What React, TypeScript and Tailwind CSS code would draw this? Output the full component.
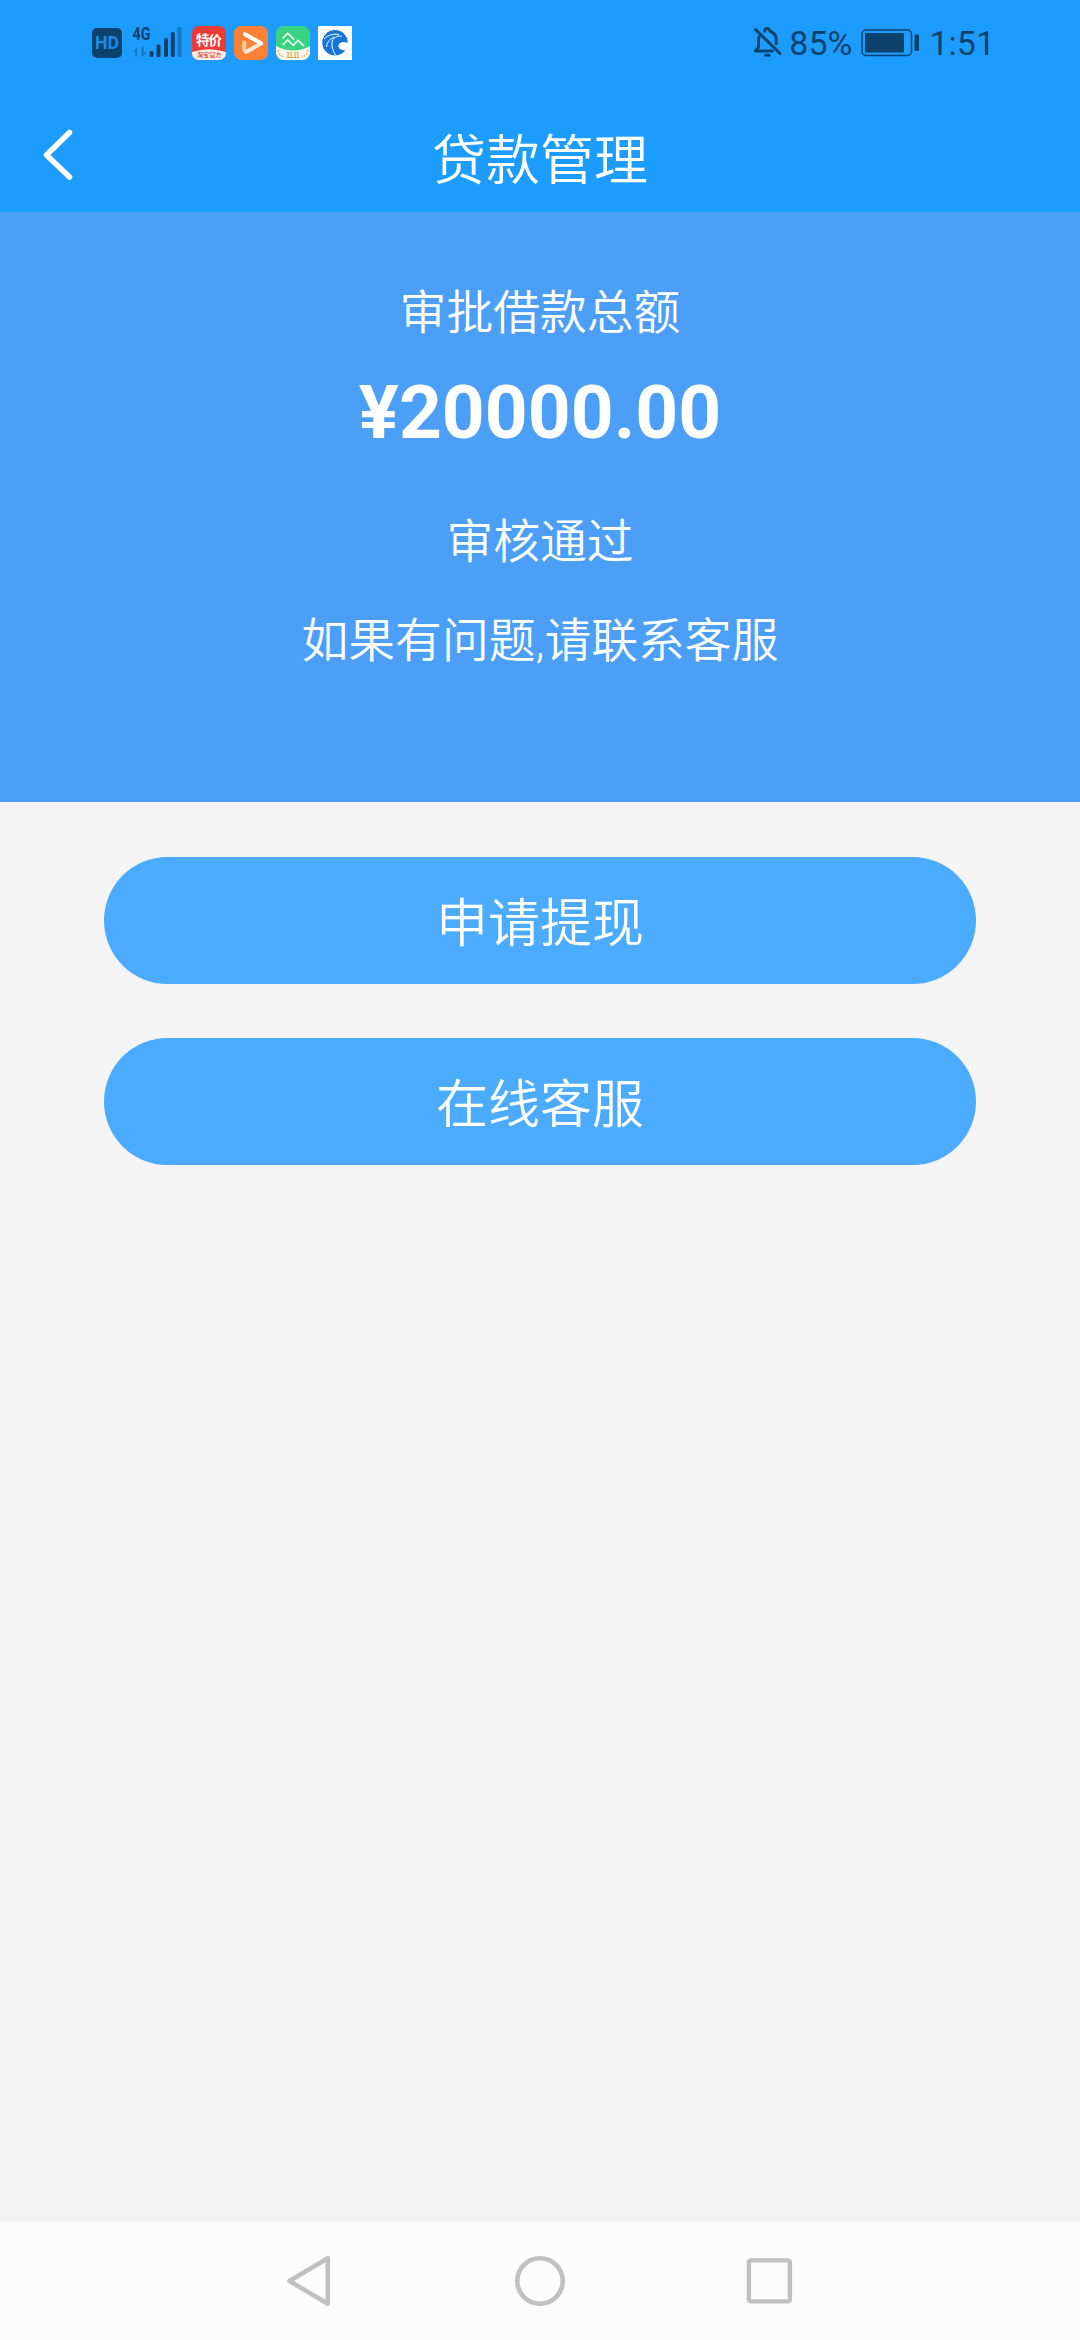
import type { ReactNode } from "react";

interface ActionButtonProps {
  label: string;
}

const actions = ["申请提现", "在线客服"];

function AppIcon({ children }: { children: ReactNode }) {
  return (
    <svg viewBox="0 0 34 34" className="size-[34px] shrink-0">
      {children}
    </svg>
  );
}

function SignalIcon() {
  return (
    <svg viewBox="0 -8 52 50" className="ml-[9px] h-[50px] w-[52px] shrink-0" fill="#0d426d">
      <text x="1.5" y="14" fontSize="19" fontWeight="700" textLength="18" lengthAdjust="spacingAndGlyphs">
        4G
      </text>
      <g opacity="0.45">
        <path d="M2.5 25.5 6 21v9.5H4.2v-5zM10.5 21h2v5.5H16l-5.5 4.2z" />
      </g>
      <rect x="18.5" y="25" width="4" height="6" rx="1.5" />
      <rect x="25.5" y="18.5" width="4" height="12.5" rx="1.5" />
      <rect x="33" y="12" width="4" height="19" rx="1.5" />
      <rect x="39.8" y="6" width="4" height="25" rx="1.5" />
      <rect x="46.5" y="1" width="4" height="30" rx="1.5" opacity="0.4" />
    </svg>
  );
}

function StatusBar() {
  return (
    <div className="flex h-[86px] items-center pr-[85px] pl-[92px] font-['Roboto',sans-serif] text-[#0d426d]">
      <svg viewBox="0 0 30 30" className="size-[30px] shrink-0">
        <rect width="30" height="30" rx="5" fill="#0d426d" />
        <text x="3" y="21.3" fontSize="18" fontWeight="700" fill="#1c8ce6" textLength="24" lengthAdjust="spacingAndGlyphs">
          HD
        </text>
      </svg>
      <SignalIcon />

      {/* Notification icons */}
      <div className="ml-[9px] flex gap-2 font-['Noto_Sans_CJK_SC',sans-serif]">
        <AppIcon>
          <defs>
            <clipPath id="saleClip">
              <rect width="34" height="34" rx="7" />
            </clipPath>
          </defs>
          <g clipPath="url(#saleClip)">
            <rect width="34" height="34" fill="#ec3b36" />
            <path d="M0 26Q17 20.5 34 26v8H0z" fill="#fdeedd" />
            <text x="4" y="18.5" fontSize="13.5" fontWeight="700" fill="#fff" textLength="26">
              特价
            </text>
            <text x="5" y="31" fontSize="6.2" fontWeight="500" fill="#d5402f" textLength="24.5">
              淘宝官方
            </text>
          </g>
        </AppIcon>
        <AppIcon>
          <rect width="34" height="34" rx="7.5" fill="#fc8136" />
          <path d="M10.3 16.5V24" stroke="#ffcf9f" strokeWidth="4" strokeLinecap="round" />
          <path d="M27 17.5 12 26" stroke="#ffe9d6" strokeWidth="4" strokeLinecap="round" />
          <path d="M11 8.2 27 17.2" stroke="#fff" strokeWidth="4" strokeLinecap="round" />
        </AppIcon>
        <AppIcon>
          <defs>
            <clipPath id="stockClip">
              <rect width="34" height="34" rx="7.5" />
            </clipPath>
          </defs>
          <g clipPath="url(#stockClip)">
            <rect width="34" height="34" fill="#38d280" />
            <path d="M0 20Q17 29 34 20v14H0z" fill="#fbf8ea" />
            <path d="m6.7 12.3 5-5 6.6 6.4M6.7 19l5-5 5.6 5.4 4.7-5 6 5.8" fill="none" stroke="#e9fff2" strokeWidth="1.7" />
            <path d="M2 24q1 5 6 7M32 24q-1 5-6 7" fill="none" stroke="#d7bd79" strokeWidth="1.6" strokeDasharray="2 1" />
            <text x="10" y="31.5" fontSize="7" fontWeight="700" fill="#c9a558" textLength="14">
              11.11
            </text>
          </g>
        </AppIcon>
        <AppIcon>
          <rect width="34" height="34" fill="#fff" />
          <circle cx="17" cy="16.8" r="12.7" fill="#1476d8" />
          <path d="M34 19.5c-3-.3-4-3.5-8-3.5-4 0-6.3 2.3-5.2 5.2 1 2.6 4.4 3.8 9.2 2.3z" fill="#fff" />
          <path d="M24 10.2c-7-1-11 3.3-10 9.3.5 3.5 1.5 7 4 10M6 13q6-6 15-4.6M8.5 21Q9 14 16 11" fill="none" stroke="#fff" strokeWidth="1" />
        </AppIcon>
      </div>

      {/* Muted bell, battery, clock */}
      <div className="ml-auto flex items-center">
        <svg viewBox="0 0 30 34" className="h-[34px] w-[30px]" fill="none" stroke="#0d426d" strokeWidth="3" strokeLinecap="round" strokeLinejoin="round">
          <path d="M2.5 3.5 27 27.5" />
          <path d="M11.5 5.2Q12 2.5 14.2 2.5T17 5.2q6.2 2 6.2 9v3.6M6.2 10.8q-.7 1.8-.7 4v6.5L2.5 25h17" />
          <path d="M12.5 29.2h3.5" />
        </svg>
        <span className="ml-[6px] text-[34px] leading-none">85%</span>
        <svg viewBox="0 0 60 28" className="ml-[9px] h-7 w-[60px]">
          <rect x="1" y="1" width="49.5" height="25.5" rx="4" fill="none" stroke="#0d426d" strokeWidth="1.5" />
          <rect x="4" y="4" width="39" height="19.5" rx="1" fill="#0d426d" />
          <rect x="53.5" y="5.5" width="4.5" height="16.5" rx="1.5" fill="#0d426d" />
        </svg>
        <span className="ml-[8px] text-[34px] leading-none">1:51</span>
      </div>
    </div>
  );
}

function Header() {
  return (
    <header className="h-[212px] bg-[#1c9cff]">
      <StatusBar />
      <div className="grid h-[126px] grid-cols-[108px_1fr_108px] items-center text-white">
        <svg viewBox="0 0 30 52" className="mt-[11px] ml-[43px] h-[52px] w-[30px]" fill="none" stroke="#fff" strokeWidth="5.5" strokeLinecap="round" strokeLinejoin="round">
          <path d="M26.5 3.5 3.5 26l23 22" />
        </svg>
        <h1 className="pt-[25px] text-center text-[54px] leading-none font-[350]">贷款管理</h1>
      </div>
    </header>
  );
}

function ActionButton({ label }: ActionButtonProps) {
  return (
    <button className="h-[127px] rounded-full bg-[#4babff] pt-2 text-[52px] leading-none font-[350] text-white">
      {label}
    </button>
  );
}

function NavBar() {
  return (
    <nav className="flex h-[118px] items-center justify-center gap-[177px] bg-[#fcfcfc]">
      <svg viewBox="0 0 54 54" className="size-[54px]" fill="none" stroke="#c0c0c0" strokeWidth="4.5" strokeLinejoin="round">
        <path d="M45.8 4.2v45.6L7.5 27z" />
      </svg>
      <svg viewBox="0 0 54 54" className="size-[54px]" fill="none" stroke="#c0c0c0" strokeWidth="4.6">
        <circle cx="27" cy="27" r="22.7" />
      </svg>
      <svg viewBox="0 0 54 54" className="size-[54px]" fill="none" stroke="#c0c0c0" strokeWidth="4.4">
        <rect x="4.9" y="6.4" width="41" height="41" rx="2" />
      </svg>
    </nav>
  );
}

export default function App() {
  return (
    <div className="flex h-[2340px] w-[1080px] flex-col bg-[#f4f4f4] font-['Roboto','Noto_Sans_CJK_SC',sans-serif]">
      <Header />

      {/* Loan summary */}
      <section className="flex h-[590px] flex-col items-center bg-[#4c9ff6] pt-[66px] text-[46.8px] leading-[70px] font-[350] text-white">
        <p>审批借款总额</p>
        <p className="mt-[9px] text-[74.88px] leading-[112px] font-bold">¥20000.00</p>
        <p className="mt-[38px]">审核通过</p>
        <p className="mt-[29px]">如果有问题,请联系客服</p>
      </section>

      <main className="flex flex-1 flex-col gap-[54px] px-[104px] pt-[55px]">
        {actions.map((label) => (
          <ActionButton key={label} label={label} />
        ))}
      </main>

      <NavBar />
    </div>
  );
}
